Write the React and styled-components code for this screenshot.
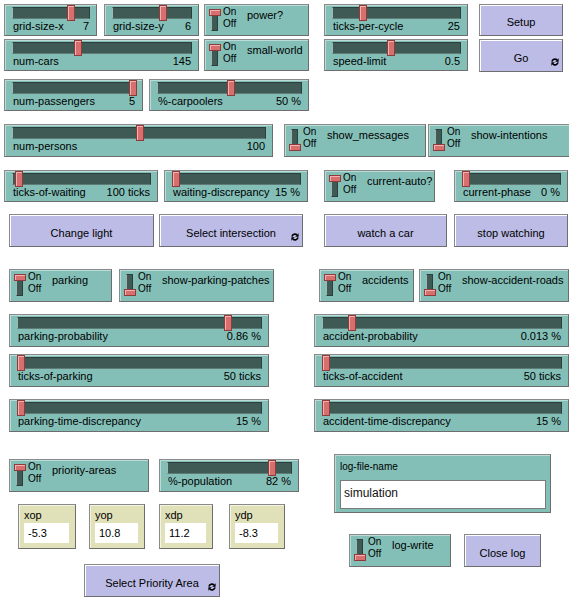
import React from "react";
import styled, { createGlobalStyle } from "styled-components";

const GlobalStyle = createGlobalStyle`
  body {
    margin: 0;
    background: #ffffff;
    font-family: "Liberation Sans", Arial, sans-serif;
    color: #000;
  }
`;

const Page = styled.div`
  width: 569px;
  height: 604px;
  overflow: hidden;
  box-sizing: border-box;
  padding-top: 4px;
  background: #fff;
`;

const Row = styled.div`
  display: flex;
  align-items: flex-start;
  gap: ${(p) => p.$gap || 0}px;
  padding-left: ${(p) => p.$pl || 0}px;
  margin-top: ${(p) => p.$mt || 0}px;
`;

const Column = styled.div`
  display: flex;
  flex-direction: column;
  gap: ${(p) => p.$gap || 0}px;
  padding-left: ${(p) => p.$pl || 0}px;
  padding-top: ${(p) => p.$pt || 0}px;
  width: ${(p) => (p.$w ? `${p.$w}px` : "auto")};
  flex: none;
`;

const Half = styled.div`
  display: flex;
  gap: ${(p) => p.$gap || 0}px;
  width: ${(p) => (p.$w ? `${p.$w}px` : "auto")};
  padding-left: ${(p) => p.$pl || 0}px;
  flex: none;
`;

const Widget = styled.div`
  position: relative;
  flex: none;
  width: ${(p) => p.$w}px;
  height: ${(p) => p.$h}px;
  box-sizing: border-box;
  border: 1px solid #8a8a8a;
  border-right-color: #6d6d6d;
  border-bottom-color: #6d6d6d;
  font-size: 11px;
  white-space: nowrap;
`;

const SliderBox = styled(Widget)`
  background: #83bfb7;
  box-shadow: inset 1px 1px 0 #b9dcd7;
  padding: 0 6px 0 7px;
`;

const TrackArea = styled.div`
  position: relative;
  height: 16px;
`;

const Bar = styled.div`
  position: absolute;
  left: 0;
  right: 0;
  top: 2px;
  height: 12px;
  box-sizing: border-box;
  background: #3f5a55;
  border: 1px solid #2c3f3c;
  border-left-color: #9fb8b4;
  border-bottom-color: #5e7b76;
`;

const Thumb = styled.div`
  position: absolute;
  top: 0;
  width: 8px;
  height: 16px;
  box-sizing: border-box;
  background: #d86f6f;
  border: 1px solid #8e3b3b;
  box-shadow: inset 1px 1px 0 #f3b1b1;
`;

const LabelRow = styled.div`
  display: flex;
  justify-content: space-between;
  height: 14px;
  line-height: 14px;
  margin-top: -2px;
  padding: 0 1px;
`;

const SwitchBox = styled(Widget)`
  background: #83bfb7;
  box-shadow: inset 1px 1px 0 #b9dcd7;
  display: flex;
  align-items: flex-start;
  padding-left: 4px;
`;

const Toggle = styled.div`
  position: relative;
  width: 12px;
  height: 22px;
  margin-top: 4px;
  flex: none;
`;

const ToggleTrack = styled.div`
  position: absolute;
  left: 2px;
  top: 0;
  width: 7px;
  height: 22px;
  box-sizing: border-box;
  background: #3f5a55;
  border: 1px solid #2c3f3c;
  border-left-color: #9fb8b4;
`;

const Knob = styled.div`
  position: absolute;
  left: 0;
  top: ${(p) => (p.$on ? 0 : 15)}px;
  width: 12px;
  height: 7px;
  box-sizing: border-box;
  background: #d86f6f;
  border: 1px solid #8e3b3b;
  box-shadow: inset 1px 1px 0 #f3b1b1;
`;

const OnOff = styled.div`
  display: flex;
  flex-direction: column;
  width: 18px;
  margin-left: 2px;
  padding-top: 1px;
  font-size: 10px;
  line-height: 11.5px;
  flex: none;
`;

const SwitchLabel = styled.div`
  margin-left: 6px;
  margin-top: 3px;
  line-height: 14px;
`;

const ButtonBox = styled(Widget)`
  background: #bcbce6;
  box-shadow: inset 1px 1px 0 #ffffff;
  display: flex;
  align-items: center;
  justify-content: center;
  padding-top: 4px;
`;

const Forever = styled.svg`
  position: absolute;
  right: 3px;
  bottom: 5px;
`;

const MonitorBox = styled(Widget)`
  background: #e0e0b9;
  box-shadow: inset 1px 1px 0 #f4f4e0;
  padding: 3px 6px 0 5px;
`;

const MonitorLabel = styled.div`
  line-height: 14px;
  height: 15px;
`;

const MonitorValue = styled.div`
  background: #fff;
  height: 20px;
  line-height: 20px;
  padding-left: 4px;
`;

const InputBox = styled(Widget)`
  background: #83bfb7;
  box-shadow: inset 1px 1px 0 #b9dcd7;
  padding: 5px 4px 0 5px;
`;

const InputLabel = styled.div`
  font-size: 10px;
  line-height: 14px;
  height: 20px;
`;

const InputField = styled.div`
  height: 29px;
  box-sizing: border-box;
  background: #fff;
  border: 1px solid #7a7a7a;
  padding-left: 3px;
  font-size: 12px;
  line-height: 24px;
  color: #111;
`;

const ForeverIcon = () => (
  <Forever width="8" height="8" viewBox="0 0 8 8">
    <path d="M1 3.6 A3 3 0 0 1 6 1.9" fill="none" stroke="#000" strokeWidth="1.6" />
    <path d="M7.6 0.2 L7.6 3.7 L4.2 3.7 Z" fill="#000" />
    <path d="M7 4.4 A3 3 0 0 1 2 6.1" fill="none" stroke="#000" strokeWidth="1.6" />
    <path d="M0.4 7.8 L0.4 4.3 L3.8 4.3 Z" fill="#000" />
  </Forever>
);

function Slider({ w, h = 32, label, value, pos }) {
  const trackW = w - 14;
  return (
    <SliderBox $w={w} $h={h}>
      <TrackArea>
        <Bar />
        <Thumb style={{ left: Math.round(pos * (trackW - 8)) }} />
      </TrackArea>
      <LabelRow>
        <span>{label}</span>
        <span>{value}</span>
      </LabelRow>
    </SliderBox>
  );
}

function Switch({ w, h = 32, label, on }) {
  return (
    <SwitchBox $w={w} $h={h}>
      <Toggle>
        <ToggleTrack />
        <Knob $on={on} />
      </Toggle>
      <OnOff>
        <span>On</span>
        <span>Off</span>
      </OnOff>
      <SwitchLabel>{label}</SwitchLabel>
    </SwitchBox>
  );
}

function Button({ w, h = 33, label, forever }) {
  return (
    <ButtonBox $w={w} $h={h}>
      {label}
      {forever && <ForeverIcon />}
    </ButtonBox>
  );
}

function Monitor({ w, label, value }) {
  return (
    <MonitorBox $w={w} $h={45}>
      <MonitorLabel>{label}</MonitorLabel>
      <MonitorValue>{value}</MonitorValue>
    </MonitorBox>
  );
}

export default function App() {
  return (
    <>
      <GlobalStyle />
      <Page>
        <Row $pl={4} $gap={15}>
          <Column $gap={3}>
            <Row $gap={5}>
              <Row $gap={7}>
                <Slider w={93} label="grid-size-x" value="7" pos={0.77} />
                <Slider w={95} label="grid-size-y" value="6" pos={0.64} />
              </Row>
              <Switch w={105} label="power?" on />
            </Row>
            <Row $gap={5}>
              <Slider w={195} label="num-cars" value="145" pos={0.36} />
              <Switch w={105} label="small-world" on />
            </Row>
          </Column>
          <Row $gap={11}>
            <Column $gap={3}>
              <Slider w={144} label="ticks-per-cycle" value="25" pos={0.225} />
              <Slider w={144} label="speed-limit" value="0.5" pos={0.45} />
            </Column>
            <Column $gap={3}>
              <Button w={84} h={32} label="Setup" />
              <Button w={84} label="Go" forever />
            </Column>
          </Row>
        </Row>

        <Row $pl={4} $gap={6} $mt={7}>
          <Slider w={139} label="num-passengers" value="5" pos={1} />
          <Slider w={160} label="%-carpoolers" value="50 %" pos={0.51} />
        </Row>

        <Row $pl={4} $gap={11} $mt={13}>
          <Slider w={269} h={33} label="num-persons" value="100" pos={0.504} />
          <Row $gap={2}>
            <Switch w={142} h={33} label="show_messages" />
            <Switch w={145} h={33} label="show-intentions" />
          </Row>
        </Row>

        <Row $pl={4} $gap={16} $mt={13}>
          <Row $gap={6}>
            <Slider w={154} label="ticks-of-waiting" value="100 ticks" pos={0.02} />
            <Slider w={144} label="waiting-discrepancy" value="15 %" pos={0} />
          </Row>
          <Row $gap={19}>
            <Switch w={111} label="current-auto?" on />
            <Slider w={114} label="current-phase" value="0 %" pos={0} />
          </Row>
        </Row>

        <Row $pl={9} $gap={21} $mt={12}>
          <Row $gap={5}>
            <Button w={145} label="Change light" />
            <Button w={144} label="Select intersection" forever />
          </Row>
          <Row $gap={7}>
            <Button w={123} label="watch a car" />
            <Button w={114} label="stop watching" />
          </Row>
        </Row>

        <Row $pl={9} $mt={22}>
          <Half $w={305} $gap={7}>
            <Switch w={103} h={33} label="parking" on />
            <Switch w={155} h={33} label="show-parking-patches" />
          </Half>
          <Half $pl={5} $gap={5}>
            <Switch w={95} h={33} label="accidents" on />
            <Switch w={150} h={33} label="show-accident-roads" />
          </Half>
        </Row>

        <Row $pl={9} $mt={12}>
          <Half $w={305}>
            <Slider w={260} h={33} label="parking-probability" value="0.86 %" pos={0.87} />
          </Half>
          <Slider w={255} h={33} label="accident-probability" value="0.013 %" pos={0.11} />
        </Row>

        <Row $pl={9} $mt={7}>
          <Half $w={305}>
            <Slider w={260} h={33} label="ticks-of-parking" value="50 ticks" pos={0} />
          </Half>
          <Slider w={255} h={33} label="ticks-of-accident" value="50 ticks" pos={0} />
        </Row>

        <Row $pl={9} $mt={12}>
          <Half $w={305}>
            <Slider w={260} h={33} label="parking-time-discrepancy" value="15 %" pos={0} />
          </Half>
          <Slider w={255} h={33} label="accident-time-discrepancy" value="15 %" pos={0} />
        </Row>

        <Row $mt={22}>
          <Column $w={325} $pl={9} $pt={5}>
            <Row $gap={10}>
              <Switch w={140} h={33} label="priority-areas" on />
              <Slider w={140} h={33} label="%-population" value="82 %" pos={0.86} />
            </Row>
            <Row $pl={9} $gap={13} $mt={12}>
              <Monitor w={58} label="xop" value="-5.3" />
              <Row $gap={14}>
                <Monitor w={56} label="yop" value="10.8" />
                <Row $gap={16}>
                  <Monitor w={54} label="xdp" value="11.2" />
                  <Monitor w={56} label="ydp" value="-8.3" />
                </Row>
              </Row>
            </Row>
            <Row $pl={75} $mt={15}>
              <Button w={136} label="Select Priority Area" forever />
            </Row>
          </Column>
          <Column>
            <InputBox $w={217} $h={59}>
              <InputLabel>log-file-name</InputLabel>
              <InputField>simulation</InputField>
            </InputBox>
            <Row $pl={15} $gap={13} $mt={21}>
              <Switch w={102} h={33} label="log-write" />
              <Button w={77} label="Close log" />
            </Row>
          </Column>
        </Row>
      </Page>
    </>
  );
}
